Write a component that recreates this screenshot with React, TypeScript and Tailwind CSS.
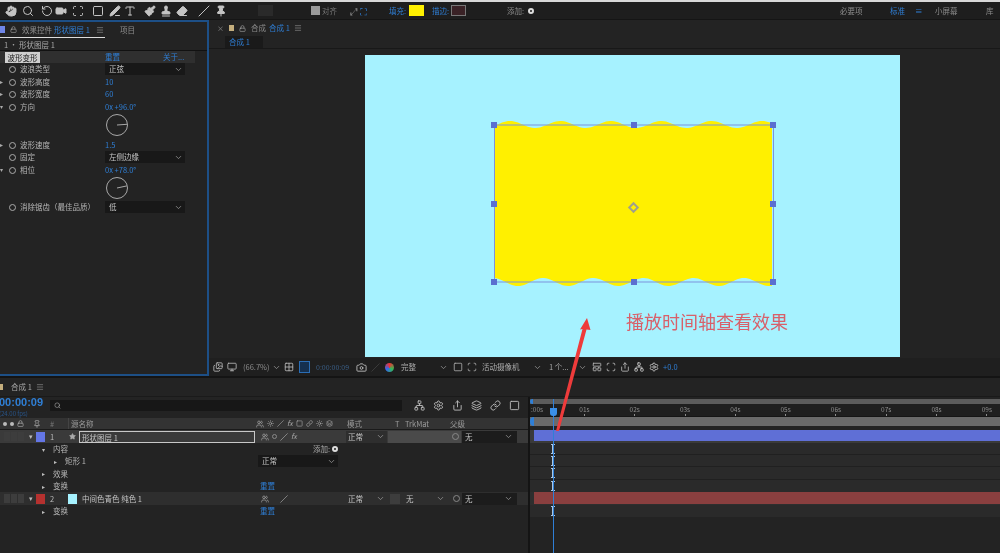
import * as React from 'react'
import { Hand, Search, RotateCcw, Video, Scan, Square, PenLine, Type, Paintbrush, Stamp, Eraser, Pin, Monitor, Camera, ChevronDown, Images, Grid2x2, Settings, Users, Network, Share, LayoutPanelTop, Sun, Layers, Link, Slash, Star, Menu, Lock } from 'lucide-react'

const blue = 'text-[#2f7fd6]'

function wavePath() {
  const pts: string[] = []
  for (let x = 494; x <= 773; x += 2) {
    const y = 124.5 - 3.5 * Math.cos((2 * Math.PI * (x - 510)) / 50.4)
    pts.push(`${x - 365},${(y - 55).toFixed(1)}`)
  }
  for (let x = 772; x >= 494; x -= 2) {
    const y = 282 + 4 * Math.cos((2 * Math.PI * (x - 518)) / 50.2)
    pts.push(`${x - 365},${(y - 55).toFixed(1)}`)
  }
  return 'M' + pts.join(' L') + ' Z'
}

function Chevron() {
  return <ChevronDown size={9} strokeWidth={2} className="text-[#999] shrink-0" />
}

function Stopwatch() {
  return <span className="w-[7px] h-[7px] rounded-full border border-[#aaa] shrink-0" />
}

function Dropdown({ label, className }: { label: string, className: string }) {
  return <div className={`flex items-center justify-between h-[12px] pl-[4px] pr-[2px] bg-[#181818] text-[#c4c4c4] ${className}`}>
    <span>{label}</span>
    <Chevron />
  </div>
}

function Dial({ angle }: { angle: number }) {
  return <svg width="24" height="24" viewBox="0 0 24 24" className="block">
    <circle cx="12" cy="12" r="10.5" fill="none" stroke="#a8a8a8" strokeWidth="1" />
    <line x1="12" y1="12" x2={12 + 10 * Math.cos((angle * Math.PI) / 180)} y2={12 + 10 * Math.sin((angle * Math.PI) / 180)} stroke="#a8a8a8" strokeWidth="1" />
  </svg>
}

function Prop({ label, twirl, h, children }: { label: string, twirl?: string, h: string, children?: React.ReactNode }) {
  return <div className={`flex items-start ${h}`}>
    <span className="w-[9px] text-[6px] leading-[12px] text-[#aaa]">{twirl}</span>
    <span className="w-[11px] h-[12px] flex items-center"><Stopwatch /></span>
    <span className="w-[85px] h-[12px] leading-[12px] text-[#b4b4b4] whitespace-nowrap">{label}</span>
    {children}
  </div>
}

function EffectControls() {
  return <div className="w-[209px] shrink-0 border-2 border-[#1d4f86] border-l-0 flex flex-col">
    <div className="h-[16px] flex items-end shrink-0">
      <div className="w-[105px] h-[16px] flex items-center border-b border-[#ddd] text-[#8d8d8d] whitespace-nowrap">
        <span className="w-[5px] h-[7px] bg-[#6f86e8] mr-[5px] shrink-0" />
        <Lock size={7} className="text-[#aaa] mr-[5px] shrink-0" />
        <span className="mr-[2px]">效果控件</span>
        <span className={`${blue} mr-[6px]`}>形状图层 1</span>
        <Menu size={8} className="shrink-0" />
      </div>
      <span className="ml-[15px] h-[16px] leading-[16px] text-[#8d8d8d]">项目</span>
    </div>
    <div className="h-[13px] pl-[4px] leading-[13px] text-[#aaa] border-b border-[#111] shrink-0">1 • 形状图层 1</div>
    <div className="h-[12px] w-[195px] bg-[#2f2f2f] flex items-center shrink-0 whitespace-nowrap">
      <span className="ml-[5px] w-[35px] h-[11px] bg-[#cfcfcf] text-[#1a1a1a] leading-[11px] text-center">波形变形</span>
      <span className={`ml-[65px] ${blue}`}>重置</span>
      <span className={`ml-[43px] ${blue}`}>关于...</span>
    </div>
    <div className="flex flex-col">
      <Prop label="波浪类型" h="h-[13px]"><Dropdown label="正弦" className="w-[80px]" /></Prop>
      <Prop label="波形高度" twirl="▸" h="h-[12px]"><span className={blue}>10</span></Prop>
      <Prop label="波形宽度" twirl="▸" h="h-[13px]"><span className={blue}>60</span></Prop>
      <Prop label="方向" twirl="▾" h="h-[38px]">
        <div className="flex flex-col">
          <span className={`${blue} h-[12px] leading-[12px]`}>0x +96.0°</span>
          <Dial angle={-4} />
        </div>
      </Prop>
      <Prop label="波形速度" twirl="▸" h="h-[12px]"><span className={blue}>1.5</span></Prop>
      <Prop label="固定" h="h-[13px]"><Dropdown label="左侧边缘" className="w-[80px]" /></Prop>
      <Prop label="相位" twirl="▾" h="h-[37px]">
        <div className="flex flex-col">
          <span className={`${blue} h-[12px] leading-[12px]`}>0x +78.0°</span>
          <Dial angle={-12} />
        </div>
      </Prop>
      <Prop label="消除锯齿（最佳品质）" h="h-[13px]"><Dropdown label="低" className="w-[80px]" /></Prop>
    </div>
  </div>
}

function Composition() {
  const handles = [[129, 70], [269, 70], [408, 70], [129, 149], [408, 149], [129, 227], [269, 227], [408, 227]]
  return <div className="relative w-[535px] h-[302px] bg-[#a6f2ff]">
    <svg width="535" height="302" viewBox="0 0 535 302" className="absolute inset-0">
      <path d={wavePath()} fill="#fff000" />
      <rect x="129.5" y="70" width="279" height="157" fill="none" stroke="#7d93dc" strokeWidth="1" />
      {handles.map(([x, y]) => <rect key={`${x}-${y}`} x={x - 3} y={y - 3} width="6" height="6" fill="#5b6fd0" />)}
      <rect x="265.5" y="149.5" width="6" height="6" transform="rotate(45 268.5 152.5)" fill="none" stroke="#a0a08a" strokeWidth="2" />
    </svg>
  </div>
}

function ViewerBar() {
  return <div className="h-[18px] bg-[#1f1f1f] flex items-center text-[#8d8d8d] shrink-0 pl-[4px] whitespace-nowrap">
    <Images size={10} className="text-[#bbb] shrink-0" />
    <Monitor size={10} className="ml-[4px] text-[#bbb] shrink-0" />
    <span className="ml-[6px] w-[29px]">(66.7%)</span>
    <Chevron />
    <Grid2x2 size={10} className="ml-[3px] text-[#bbb] shrink-0" />
    <span className="ml-[5px] w-[11px] h-[12px] bg-[#15304f] border border-[#2a6db5] shrink-0" />
    <span className="ml-[6px] w-[36px] text-[#3a5f88] text-[7px]">0:00:00:09</span>
    <Camera size={11} className="ml-[4px] text-[#bbb] shrink-0" />
    <Slash size={9} className="ml-[4px] text-[#444] shrink-0" />
    <span className="ml-[5px] w-[9px] h-[9px] rounded-full bg-[conic-gradient(#e33,#3b5,#36e,#e33)] shrink-0" />
    <span className="ml-[7px] w-[38px] text-[#aaa]">完整</span>
    <Chevron />
    <Square size={10} className="ml-[5px] text-[#aaa] shrink-0" />
    <Scan size={10} className="ml-[4px] text-[#aaa] shrink-0" />
    <span className="ml-[5px] w-[51px] text-[#aaa]">活动摄像机</span>
    <Chevron />
    <span className="ml-[7px] w-[29px] text-[#aaa]">1 个...</span>
    <Chevron />
    <LayoutPanelTop size={10} className="ml-[5px] text-[#bbb] shrink-0" />
    <Scan size={10} className="ml-[4px] text-[#bbb] shrink-0" />
    <Share size={10} className="ml-[4px] text-[#bbb] shrink-0" />
    <Network size={10} className="ml-[4px] text-[#ccc] shrink-0" />
    <Settings size={10} className="ml-[5px] text-[#ccc] shrink-0" />
    <span className={`ml-[4px] ${blue}`}>+0.0</span>
  </div>
}

function Viewer() {
  return <div className="flex-1 flex flex-col min-w-0">
    <div className="h-[16px] flex items-center pl-[8px] text-[#8d8d8d] shrink-0 whitespace-nowrap">
      <span className="mr-[5px] text-[7px]">×</span>
      <span className="w-[5px] h-[6px] bg-[#c4ae7d] mr-[5px]" />
      <Lock size={7} className="text-[#aaa] mr-[5px]" />
      <span className="mr-[3px]">合成</span>
      <span className={`${blue} mr-[4px]`}>合成 1</span>
      <Menu size={8} />
    </div>
    <div className="h-[13px] pl-[16px] shrink-0 border-b border-[#181818]">
      <span className={`block w-[38px] h-[12px] bg-[#1a1a1a] ${blue} leading-[12px] pl-[4px]`}>合成 1</span>
    </div>
    <div className="flex-1 bg-[#232323] pl-[156px] pt-[6px] min-h-0">
      <Composition />
    </div>
    <ViewerBar />
  </div>
}

function Toolbar() {
  const tools = [
    [Hand, 'ml-[5px]', true], [Search, 'ml-[5px]', false], [RotateCcw, 'ml-[7px]', false], [Video, 'ml-[2px]', true], [Scan, 'ml-[5px]', false],
    [Square, 'ml-[8px]', false], [PenLine, 'ml-[5px]', true], [Type, 'ml-[3px]', false], [Paintbrush, 'ml-[8px]', true], [Stamp, 'ml-[4px]', true],
    [Eraser, 'ml-[4px]', true], [Slash, 'ml-[10px]', false], [Pin, 'ml-[5px]', true],
  ] as const
  return <div className="h-[18px] bg-[#1e1e1e] flex items-center text-[#9a9a9a] shrink-0 border-b border-[#151515] whitespace-nowrap">
    {tools.map(([Icon, ml, solid], i) => <Icon key={i} size={12} strokeWidth={2} fill={solid ? 'currentColor' : 'none'} className={`${ml} text-[#c4c4c4] shrink-0`} />)}
    <span className="ml-[31px] w-[15px] h-[11px] bg-[#2a2a2a] shrink-0" />
    <span className="ml-[38px] w-[9px] h-[9px] bg-[#9a9a9a] shrink-0" />
    <span className="ml-[2px] w-[20px] text-[#777]">对齐</span>
    <span className="ml-[8px] text-[#888] w-[30px] text-[10px] leading-none">⤢ <span className={blue}>⛶</span></span>
    <span className={`ml-[9px] w-[18px] ${blue}`}>填充:</span>
    <span className="ml-[2px] w-[15px] h-[11px] bg-[#fff000] shrink-0" />
    <span className={`ml-[8px] w-[18px] ${blue}`}>描边:</span>
    <span className="ml-[1px] w-[15px] h-[11px] bg-[#3a2226] border border-[#777] shrink-0" />
    <span className="ml-[41px] w-[21px] text-[#8d8d8d]">添加:</span>
    <span className="w-[6px] h-[6px] rounded-full border-2 border-[#ddd] shrink-0" />
    <span className="ml-[306px] w-[50px] text-[#8d8d8d]">必要项</span>
    <span className={`w-[25px] ${blue}`}>标准</span>
    <span className={`w-[20px] ${blue}`}>≡</span>
    <span className="w-[51px] text-[#8d8d8d]">小屏幕</span>
    <span className="text-[#8d8d8d]">库</span>
  </div>
}

function ColHeader() {
  return <div className="h-[12px] flex items-center bg-[#333] text-[#9a9a9a] border-b border-[#1a1a1a] shrink-0">
    <div className="w-[33px] flex items-center gap-[3px] pl-[3px]">
      <span className="w-[4px] h-[4px] rounded-full bg-[#bbb]" />
      <span className="w-[4px] h-[4px] rounded-full bg-[#bbb]" />
      <Lock size={7} className="text-[#bbb]" />
    </div>
    <Pin size={8} className="text-[#bbb] shrink-0" />
    <span className="ml-[9px] w-[18px] text-[#777]">#</span>
    <span className="w-[188px] border-l border-[#444] pl-[2px]">源名称</span>
    <div className="w-[91px] flex items-center gap-[3px] text-[#aaa]">
      <Users size={8} /><Sun size={7} /><Slash size={7} /><span className="italic text-[7px]">fx</span><Square size={7} /><Link size={7} /><Sun size={7} /><Layers size={7} />
    </div>
    <span className="w-[48px]">模式</span>
    <span className="w-[10px]">T</span>
    <span className="w-[45px] text-[7.5px]">TrkMat</span>
    <span>父级</span>
  </div>
}

function LayerSwitches({ label }: { label: 'row1' | 'row2' }) {
  return <div className="w-[88px] flex items-center gap-[3px] text-[#aaa] pl-[3px]">
    <Users size={8} className="shrink-0" />
    <span className={`w-[5px] h-[5px] rounded-full border ${label === 'row1' ? 'border-[#888]' : 'border-transparent'}`} />
    <Slash size={8} className="shrink-0" />
    {label === 'row1' && <span className="italic text-[7px]">fx</span>}
  </div>
}

function LayerRow({ n, color, name, boxed, swatch }: { n: number, color: string, name: string, boxed?: boolean, swatch?: boolean }) {
  return <div className={`h-[13px] flex items-center shrink-0 ${boxed ? 'bg-[#3a3a3a]' : 'bg-[#2e2e2e]'} text-[#c4c4c4]`}>
    <div className="w-[29px] flex gap-[1px] pl-[4px]">
      <span className="w-[6px] h-[9px] bg-[#3d3d3d]" /><span className="w-[6px] h-[9px] bg-[#3d3d3d]" /><span className="w-[6px] h-[9px] bg-[#3d3d3d]" />
    </div>
    <span className="w-[7px] text-[7px] text-[#bbb]">▾</span>
    <span className={`w-[9px] h-[10px] ${color}`} />
    <span className="w-[23px] pl-[5px] text-[#bbb]">{n}</span>
    {swatch
      ? <span className="w-[9px] h-[10px] bg-[#a6f2ff] shrink-0 mr-[3px]" />
      : <Star size={7} fill="#aaa" className="text-[#aaa] shrink-0 ml-[1px] mr-[3px]" />}
    <div className={`flex-1 min-w-0 h-[12px] leading-[11px] pl-[2px] whitespace-nowrap ${boxed ? 'border border-[#c8c8c8] mr-[3px]' : ''}`}>{name}</div>
  </div>
}

function SubRow({ indent, label, twirl, children, h }: { indent: string, label: string, twirl?: string, children?: React.ReactNode, h: string }) {
  return <div className={`${h} flex items-center shrink-0 text-[#b4b4b4]`}>
    <div className={`w-[258px] ${indent} flex items-center whitespace-nowrap`}>
      <span className="w-[11px] text-[6px] text-[#bbb]">{twirl}</span>
      <span>{label}</span>
    </div>
    {children}
  </div>
}

function ModeCells({ trk }: { trk?: boolean }) {
  return <>
    <div className="w-[41px] flex items-center pl-[2px] pr-[2px] h-[12px] bg-[#2e2e2e]">
      <span className="flex-1">正常</span><Chevron />
    </div>
    {trk
      ? <div className="w-[73px] h-[12px] bg-[#4a4a4a] ml-[1px] flex items-center justify-end pr-[2px]"><span className="w-[7px] h-[7px] rounded-full border border-[#888]" /></div>
      : <div className="w-[73px] h-[12px] ml-[1px] flex items-center">
        <span className="w-[10px] h-[10px] bg-[#3d3d3d] ml-[2px]" />
        <span className="ml-[6px] flex-1">无</span><Chevron />
        <span className="ml-[8px] mr-[1px] w-[7px] h-[7px] rounded-full border border-[#888]" />
      </div>}
    <div className="ml-[1px] w-[55px] h-[12px] bg-[#1c1c1c] flex items-center justify-between pl-[3px] pr-[4px]">
      <span>无</span><Chevron />
    </div>
  </>
}

function TimelineLeft() {
  return <div className="w-[530px] shrink-0 border-r-2 border-[#141414] flex flex-col">
    <div className="h-[21px] flex items-start shrink-0">
      <div className="w-[51px] -ml-[1px] flex flex-col leading-none whitespace-nowrap">
        <span className={`${blue} text-[11px] font-bold font-['Liberation_Sans',sans-serif]`}>00:00:09</span>
        <span className="mt-[3px] text-[6px] text-[#28558a]">(24.00 fps)</span>
      </div>
      <div className="mt-[3px] w-[352px] h-[11px] bg-[#171717] flex items-center pl-[4px]">
        <Search size={7} className="text-[#aaa]" />
      </div>
      <div className="mt-[3px] flex items-center gap-[8px] ml-[12px] text-[#bbb]">
        <Network size={11} /><Settings size={11} /><Share size={11} /><Layers size={11} /><Link size={11} /><Square size={11} />
      </div>
    </div>
    <ColHeader />
    <div className="flex">
      <div className="w-[258px]"><LayerRow n={1} color="bg-[#6476e6]" name="形状图层 1" boxed /></div>
      <div className="flex-1 h-[13px] flex items-center bg-[#3a3a3a] text-[#c4c4c4]">
        <LayerSwitches label="row1" />
        <ModeCells trk />
      </div>
    </div>
    <SubRow indent="pl-[42px]" twirl="▾" label="内容" h="h-[12px]"><span className="text-[#aaa] pl-[55px] whitespace-nowrap">添加: <span className="inline-block w-[6px] h-[6px] rounded-full border-2 border-[#ddd]" /></span></SubRow>
    <SubRow indent="pl-[54px]" twirl="▸" label="矩形 1" h="h-[12px]"><Dropdown label="正常" className="w-[80px]" /></SubRow>
    <SubRow indent="pl-[42px]" twirl="▸" label="效果" h="h-[13px]" />
    <SubRow indent="pl-[42px]" twirl="▸" label="变换" h="h-[12px]"><span className={`${blue} pl-[2px]`}>重置</span></SubRow>
    <div className="flex">
      <div className="w-[258px]"><LayerRow n={2} color="bg-[#b5312f]" name="中间色青色 纯色 1" swatch /></div>
      <div className="flex-1 h-[13px] flex items-center bg-[#2e2e2e] text-[#c4c4c4]">
        <LayerSwitches label="row2" />
        <ModeCells />
      </div>
    </div>
    <SubRow indent="pl-[42px]" twirl="▸" label="变换" h="h-[12px]"><span className={`${blue} pl-[2px]`}>重置</span></SubRow>
  </div>
}

function Key() {
  return <span className="ml-[21px] w-[4px] h-[10px] border-y border-[#a9c7e6] flex justify-center"><span className="w-[2px] bg-[#a9c7e6]" /></span>
}

function TimelineRight() {
  const labels = ['01s', '02s', '03s', '04s', '05s', '06s', '07s', '08s', '09s']
  return <div className="flex-1 min-w-0 relative flex flex-col overflow-hidden pt-[2px]">
    <div className="h-[5px] bg-[#5c5c5c] shrink-0" />
    <div className="h-[13px] flex shrink-0 text-[#8d8d8d] text-[6.5px] border-b border-[#151515] bg-[#1f1f1f]">
      <span className="w-[29.3px] shrink-0 pl-[1px] pt-[1px] leading-[8px]">:00s</span>
      {labels.map(l => <span key={l} className="w-[50.3px] shrink-0 flex flex-col items-center pt-[1px] leading-[8px]">
        {l}
        <span className="w-px h-[2px] mt-[1px] bg-[#8d8d8d]" />
      </span>)}
    </div>
    <div className="h-[9px] bg-[#6a6a6a] shrink-0" />
    <div className="h-[4px] shrink-0" />
    <div className="h-[13px] bg-[#3a3a3a] shrink-0 pl-[4px]"><div className="h-[11px] bg-[#5f6fd6]" /></div>
    <div className="h-[12px] flex items-center bg-[#2a2a2a] border-b border-[#202020] shrink-0"><Key /></div>
    <div className="h-[12px] flex items-center bg-[#2a2a2a] border-b border-[#202020] shrink-0"><Key /></div>
    <div className="h-[13px] flex items-center bg-[#2a2a2a] border-b border-[#202020] shrink-0"><Key /></div>
    <div className="h-[12px] flex items-center bg-[#2a2a2a] shrink-0"><Key /></div>
    <div className="h-[13px] bg-[#2e2e2e] shrink-0 pl-[4px]"><div className="h-[12px] bg-[#8a3f3f]" /></div>
    <div className="h-[12px] flex items-center bg-[#2a2a2a] shrink-0"><Key /></div>
    <div className="absolute left-[23px] top-[2px] bottom-0 w-px bg-[#2f7fd6]" />
    <div className="absolute left-[20px] top-[11px] w-[7px] h-[8px] bg-[#3a8fe8] rounded-b-[3px]" />
    <div className="absolute left-0 top-[2px] w-[3px] h-[5px] bg-[#2f7fd6] rounded-l-full" />
    <div className="absolute left-0 top-[20px] w-[4px] h-[9px] bg-[#2f7fd6] rounded-l-full" />
  </div>
}

function Timeline() {
  return <div className="flex-1 flex flex-col min-h-0 border-t-2 border-[#141414]">
    <div className="h-[19px] flex items-center text-[#8d8d8d] shrink-0 border-b border-[#1a1a1a]">
      <span className="w-[3px] h-[6px] bg-[#c4ae7d] mr-[8px]" />
      <span className="mr-[4px] text-[#aaa]">合成 1</span>
      <Menu size={8} />
    </div>
    <div className="flex-1 flex min-h-0">
      <TimelineLeft />
      <TimelineRight />
    </div>
  </div>
}

export default function App() {
  return <div className="relative w-[1000px] h-[553px] overflow-hidden bg-[#232323] flex flex-col text-[7.5px] blur-[0.4px] font-['Noto_Sans_CJK_SC','Liberation_Sans',sans-serif]">
    <div className="h-[2px] bg-[#d8d8d8] shrink-0" />
    <Toolbar />
    <div className="h-[356px] flex shrink-0">
      <EffectControls />
      <Viewer />
    </div>
    <Timeline />
    <svg width="1000" height="553" className="absolute inset-0 pointer-events-none">
      <polygon points="587,318 590.5,330 586.5,329.5 559,431 556,431 582.5,329 580,329.5" fill="#ee3b3b" />
    </svg>
    <div className="absolute left-[626px] top-[308px] text-[18px] leading-[26px] text-[#d8606a] whitespace-nowrap">播放时间轴查看效果</div>
  </div>
}
